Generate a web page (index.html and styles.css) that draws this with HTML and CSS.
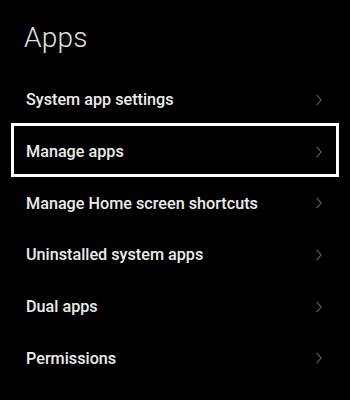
FILE: index.html
```html
<!DOCTYPE html>
<html>
<head>
<meta charset="utf-8">
<link rel="stylesheet" href="styles.css">
</head>
<body>
<div class="screen">
  <h1 class="title">Apps</h1>
  <ul class="list">
    <li class="row"><span class="label">System app settings</span><svg class="chev" viewBox="0 0 6 12"><path d="M0.6 0.8 L5.2 6 L0.6 11.2"/></svg></li>
    <li class="row selected"><span class="label">Manage apps</span><svg class="chev" viewBox="0 0 6 12"><path d="M0.6 0.8 L5.2 6 L0.6 11.2"/></svg></li>
    <li class="row"><span class="label">Manage Home screen shortcuts</span><svg class="chev" viewBox="0 0 6 12"><path d="M0.6 0.8 L5.2 6 L0.6 11.2"/></svg></li>
    <li class="row"><span class="label">Uninstalled system apps</span><svg class="chev" viewBox="0 0 6 12"><path d="M0.6 0.8 L5.2 6 L0.6 11.2"/></svg></li>
    <li class="row"><span class="label">Dual apps</span><svg class="chev" viewBox="0 0 6 12"><path d="M0.6 0.8 L5.2 6 L0.6 11.2"/></svg></li>
    <li class="row"><span class="label">Permissions</span><svg class="chev" viewBox="0 0 6 12"><path d="M0.6 0.8 L5.2 6 L0.6 11.2"/></svg></li>
  </ul>
</div>
</body>
</html>
```
FILE: styles.css
```css
html, body {
  margin: 0;
  padding: 0;
  background: #000;
}
.screen {
  width: 350px;
  height: 400px;
  overflow: hidden;
  background: #000;
  font-family: Roboto, "Liberation Sans", sans-serif;
}
.title {
  margin: 0;
  padding: 21px 0 0 24px;
  height: 74px;
  box-sizing: border-box;
  font-size: 28px;
  font-weight: 300;
  line-height: 34px;
  color: #e0e0e0;
  letter-spacing: 0.2px;
}
.list {
  list-style: none;
  margin: 0;
  padding: 0;
}
.row {
  position: relative;
  height: 51.7px;
  display: flex;
  align-items: center;
  justify-content: space-between;
  padding: 0 28px 0 26px;
  box-sizing: border-box;
}
.label {
  font-size: 16.2px;
  font-weight: 500;
  color: #ececec;
}
.chev {
  width: 6px;
  height: 12px;
  fill: none;
  stroke: #575757;
  stroke-width: 1.2;
}
.selected::after {
  content: "";
  position: absolute;
  left: 11px;
  right: 11px;
  top: -3px;
  bottom: 0;
  border: 3px solid #fff;
}
```
